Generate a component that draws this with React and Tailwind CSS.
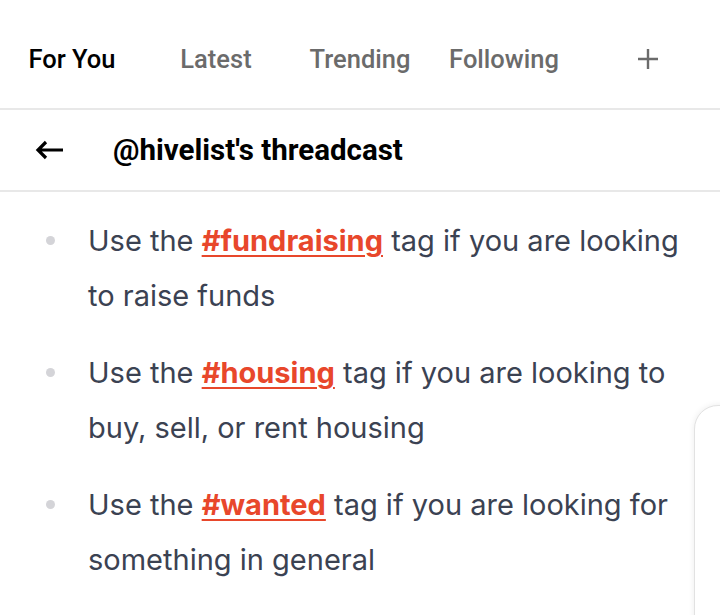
import React from "react";

const tabs = ["For You", "Latest", "Trending", "Following"];

const items = [
  { tag: "#fundraising", rest: " tag if you are looking to raise funds" },
  { tag: "#housing", rest: " tag if you are looking to buy, sell, or rent housing" },
  { tag: "#wanted", rest: " tag if you are looking for something in general" },
];

const App = () => {
  return (
    <div className="relative h-[615px] w-[720px] overflow-hidden bg-white">
      {/* Tabs */}
      <div className="grid h-[110px] grid-cols-5 items-center border-b-2 border-[#e8e8e8] pt-[10px] font-['Roboto',sans-serif] text-[25.5px] font-medium">
        {tabs.map((t, i) => (
          <div
            key={t}
            className={`text-center ${i === 0 ? "text-black" : "text-[#6b6b6b]"}`}
          >
            {t}
          </div>
        ))}
        <div className="flex justify-center">
          <svg width="22" height="22" viewBox="0 0 22 22" className="text-[#6b6b6b]">
            <path d="M11 1v20M1 11h20" stroke="currentColor" strokeWidth="2.4" />
          </svg>
        </div>
      </div>

      {/* Header */}
      <div className="flex h-[82px] items-center border-b-2 border-[#e8e8e8] font-['Roboto',sans-serif]">
        <div className="flex w-[113px] pl-[35px]">
          <svg width="29" height="20" viewBox="0 0 29 20">
            <path
              d="M28 10H3M11 2L3 10l8 8"
              fill="none"
              stroke="black"
              strokeWidth="3.2"
            />
          </svg>
        </div>
        <div className="text-[29.5px] font-bold text-black">@hivelist's threadcast</div>
      </div>

      {/* List */}
      <ul className="flex flex-col gap-[22px] pt-[21px] font-['Inter',sans-serif] text-[29px] leading-[55px] text-[#3b4252]">
        {items.map((it) => (
          <li key={it.tag} className="flex">
            <div className="flex h-[55px] w-[88px] shrink-0 items-center pl-[46px]">
              <div className="h-[9px] w-[9px] rounded-full bg-[#d4d4d8]" />
            </div>
            <div className="w-[600px]">
              Use the{" "}
              <a className="font-bold text-[#e8472b] underline decoration-[2px] underline-offset-[4px]">
                {it.tag}
              </a>
              {it.rest}
            </div>
          </li>
        ))}
      </ul>

      {/* Floating card edge */}
      <div className="absolute left-[694px] top-[405px] h-[260px] w-[100px] rounded-[24px] border border-[#e2e2e2] bg-white shadow-[0_0_6px_rgba(0,0,0,0.08)]" />
    </div>
  );
};

export default App;
